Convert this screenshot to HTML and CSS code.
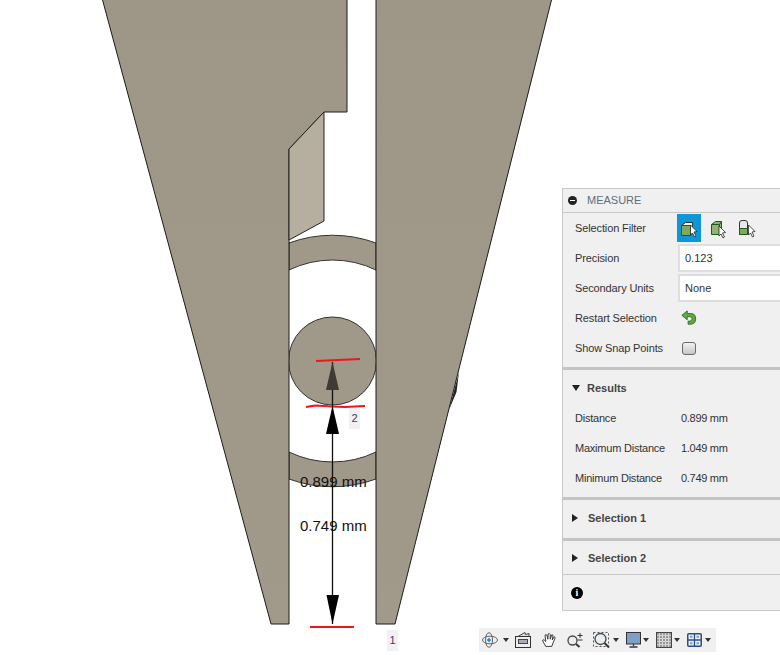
FILE: index.html
```html
<!DOCTYPE html>
<html lang="en">
<head>
    <meta charset="UTF-8">
    <meta name="viewport" content="width=device-width, initial-scale=1.0">
    <title>Measure</title>
    <link rel="stylesheet" href="styles.css">
</head>
<body>
    <svg class="model" width="780" height="655" viewBox="0 0 780 655">
        <defs>
            <linearGradient id="body" x1="0" y1="0" x2="0" y2="1">
                <stop offset="0" stop-color="#9e9686"/>
                <stop offset="1" stop-color="#a19a8a"/>
            </linearGradient>
        </defs>
        <!-- ring -->
        <path class="part" d="M289 243 A126 126 0 0 1 376 243 L376 270 A100 100 0 0 0 289 270 Z"/>
        <path class="part" d="M289 452 A100 100 0 0 0 376 452 L376 479 A126 126 0 0 1 289 479 Z"/>
        <circle class="part" cx="332.5" cy="361" r="44"/>
        <!-- jaws -->
        <path class="sliver" d="M459 372 L456.500 392 L449 410 Z"/>
        <path class="jaw" d="M102 -2 L347 -2 L347 112 L324 112 L289 149 L289 624 L271 624 Z"/>
        <path class="jaw" d="M376 -2 L552 -2 L395 624 L376 624 Z"/>
        <path class="face" d="M289 149 L324 112 L324 221 L289 240 Z"/>

        <path class="red" d="M316 361 L338 360 L360 359"/>
        <path class="red" d="M306 407 L315 405.500 L332 406.500 L345 407 L365 406"/>
        <path class="red" d="M310 627 L354 627"/>

        <path class="dim" d="M332.500 362 L332.500 624"/>
        <path class="head-faint" d="M332.500 362 L339 390 L326 390 Z"/>
        <path class="head" d="M332.500 406 L339 434 L326 434 Z"/>
        <path class="head" d="M332.500 624 L339 595 L326.500 595 Z"/>

        <text class="dim-label" x="300" y="487">0.899 mm</text>
        <text class="dim-label" x="300" y="531">0.749 mm</text>
    </svg>

    <div class="tag tag-two">2</div>
    <div class="tag tag-one">1</div>

    <section class="panel">
        <header class="panel-head">
            <span class="collapse"></span>
            <span class="panel-title">MEASURE</span>
        </header>

        <div class="group">
            <div class="row">
                <label>Selection Filter</label>
                <div class="filters">
                    <span class="filter active">
                        <svg width="24" height="28" viewBox="0 0 24 28">
                            <path d="M4.500 11.500 L8.500 8.500 H15.500 V18 L13.500 21.500 H4.500 Z" fill="#f2f2ee" stroke="#333"/>
                            <path d="M4.500 11.500 H13.500 V21.500 H4.500 Z" fill="#7fa860" stroke="#1f5a1a"/>
                            <path d="M13.500 11 L20 17.500 L17 18 L19 22 L17.500 23 L15.500 19 L13.500 21 Z" fill="#fff" stroke="#222" stroke-width=".8"/>
                        </svg>
                    </span>
                    <span class="filter">
                        <svg width="24" height="28" viewBox="0 0 24 28">
                            <path d="M4.500 10.500 L8.500 7.500 H14.500 V17 L12.500 20.500 H4.500 Z" fill="#8fb570" stroke="#1f5a1a"/>
                            <path d="M4.500 10.500 H12.500 V20.500 M12.500 10.500 L14.500 7.500" fill="none" stroke="#1f5a1a"/>
                            <path d="M12 12 L18.500 18.500 L15.500 19 L17.500 23 L16 24 L14 20 L12 22 Z" fill="#fff" stroke="#222" stroke-width=".8"/>
                        </svg>
                    </span>
                    <span class="filter">
                        <svg width="24" height="28" viewBox="0 0 24 28">
                            <path d="M2.500 9 Q2.500 6.500 5 6.500 H8 Q10.500 6.500 10.500 9 V20.500 H2.500 Z" fill="#e6e8ea" stroke="#333"/>
                            <path d="M2.500 14.500 H10.500 V20.500 H2.500 Z" fill="#7fa860" stroke="#1f5a1a"/>
                            <path d="M11.500 11 L18 17.500 L15 18 L17 22 L15.500 23 L13.500 19 L11.500 21 Z" fill="#fff" stroke="#222" stroke-width=".8"/>
                        </svg>
                    </span>
                </div>
            </div>
            <div class="row">
                <label>Precision</label>
                <div class="field">0.123</div>
            </div>
            <div class="row">
                <label>Secondary Units</label>
                <div class="field">None</div>
            </div>
            <div class="row">
                <label>Restart Selection</label>
                <svg class="restart" width="16" height="16" viewBox="0 0 18 18">
                    <path d="M1 6 L7 1 V4 H11 Q16.500 4 16.500 10 Q16.500 16 10 16 H8 V12.500 H10 Q12.500 12.500 12.500 10 Q12.500 7.500 10 7.500 H7 V11 Z" fill="#63a947" stroke="#2c6a22" stroke-width="1"/>
                </svg>
            </div>
            <div class="row">
                <label>Show Snap Points</label>
                <span class="check"></span>
            </div>
        </div>

        <div class="group">
            <div class="section-head"><span class="arrow-down"></span>Results</div>
            <div class="row"><label class="result">Distance</label><span class="value">0.899 mm</span></div>
            <div class="row"><label class="result">Maximum Distance</label><span class="value">1.049 mm</span></div>
            <div class="row"><label class="result">Minimum Distance</label><span class="value">0.749 mm</span></div>
        </div>

        <div class="group tight">
            <div class="section-head"><span class="arrow-right"></span>Selection 1</div>
        </div>
        <div class="group last">
            <div class="section-head"><span class="arrow-right"></span>Selection 2</div>
        </div>

        <footer class="panel-foot">
            <span class="info">i</span>
        </footer>
    </section>

    <nav class="toolbar">
        <svg class="ic-orbit" width="16" height="16" viewBox="0 0 16 16">
            <ellipse cx="8" cy="8" rx="7.500" ry="3.800" fill="none" stroke="#555" stroke-width=".9"/>
            <ellipse cx="7" cy="8" rx="3.500" ry="7.300" fill="none" stroke="#555" stroke-width=".9"/>
            <path d="M7 6 V10 M5 8 H9" stroke="#2a7fd0" stroke-width="1.500"/>
        </svg>
        <span class="caret c-first"></span>
        <svg class="ic-camera" width="16" height="16" viewBox="0 0 16 16">
            <path d="M2 5 L10 .5 L10.500 2.500 L14 1.500 V4.500" fill="#ddd" stroke="#444"/>
            <rect x=".5" y="4.500" width="15" height="11" fill="#eee" stroke="#333"/>
            <rect x="3.500" y="7.500" width="9" height="4" fill="#a9acb4" stroke="#444"/>
        </svg>
        <svg class="ic-tool" width="16" height="16" viewBox="0 0 20 20">
            <path d="M6 18 L2 11 Q2 9 4 10 L6 12 L5 4 Q6 2.500 7.500 4 L8.500 9 L9 2.500 Q10.500 1 11.500 3 L11.500 9 L13.500 3.500 Q15 3 15 5 L14 10 L16.500 6 Q18 6 17.500 8 L14.500 15 L13.500 18 Z" fill="#fff" stroke="#333" stroke-width="1.200"/>
        </svg>
        <svg class="ic-tool" width="16" height="16" viewBox="0 0 16 16">
            <circle cx="5.500" cy="8.500" r="4.500" fill="#e8eef2" stroke="#444" stroke-width="1.300"/>
            <path d="M9 12 L12.500 15" stroke="#333" stroke-width="2"/>
            <path d="M10.500 3.500 H15.500 M13 1 V6 M10.500 8 H15.500" stroke="#333"/>
        </svg>
        <svg class="ic-tool" width="17" height="16" viewBox="0 0 17 16">
            <rect x=".5" y=".5" width="15" height="14" fill="none" stroke="#555" stroke-dasharray="2 2"/>
            <circle cx="7.500" cy="7" r="5.500" fill="#e8eef2" stroke="#444" stroke-width="1.300"/>
            <path d="M11.500 11 L16 15.500" stroke="#333" stroke-width="2"/>
        </svg>
        <span class="caret c-after"></span>
        <svg class="ic-display" width="15" height="16" viewBox="0 0 15 16">
            <rect x=".5" y=".5" width="14" height="11.500" fill="#7f9fcb" stroke="#333"/>
            <path d="M7.500 12 V14 M3.500 15 H11.500" stroke="#333" stroke-width="1.300"/>
        </svg>
        <span class="caret c-near"></span>
        <svg class="ic-grid" width="16" height="16" viewBox="0 0 16 16">
            <rect x=".5" y=".5" width="15" height="15" fill="#999" stroke="#444"/>
            <path d="M3.500 1 V15 M6.500 1 V15 M9.500 1 V15 M12.500 1 V15 M1 3.500 H15 M1 6.500 H15 M1 9.500 H15 M1 12.500 H15" stroke="#d6d6d6"/>
        </svg>
        <span class="caret c-near"></span>
        <svg class="ic-grid" width="15" height="14" viewBox="0 0 15 14">
            <rect x=".75" y=".75" width="13.500" height="12.500" rx="1" fill="#e8eef5" stroke="#2c4f86" stroke-width="1.500"/>
            <path d="M7.500 1 V13 M1 7 H14" stroke="#2c4f86" stroke-width="1.300"/>
            <path d="M3 3.800 H5.500 M9.500 3.800 H12 M3 10.200 H5.500 M9.500 10.200 H12" stroke="#7f9fcb" stroke-width="2"/>
        </svg>
        <span class="caret c-after"></span>
    </nav>
</body>
</html>
```

FILE: styles.css
```css
* {
    margin: 0;
    padding: 0;
    box-sizing: border-box;
}
html, body {
    width: 780px;
    height: 655px;
    overflow: hidden;
    background: #fff;
    font-family: "Liberation Sans", Arial, sans-serif;
}
body {
    position: relative;
}

/* model viewport */
.model {
    position: absolute;
    left: 0;
    top: 0;
}
.part {
    fill: #a09888;
    stroke: #333;
    stroke-width: 1;
}
.jaw {
    fill: url(#body);
    stroke: #1c1c1c;
    stroke-width: 1;
}
.face {
    fill: #b6afa0;
    stroke: #222;
    stroke-width: 1;
}
.sliver {
    fill: #222;
}
.red {
    fill: none;
    stroke: #f0141e;
    stroke-width: 2;
}
.dim {
    stroke: #111;
    stroke-width: 1.300;
}
.head {
    fill: #000;
}
.head-faint {
    fill: #3e3b34;
}
.dim-label {
    font-size: 15px;
    fill: #111;
}
.tag {
    position: absolute;
    background: #f1f1f4;
    font-size: 11px;
    text-align: center;
}
.tag-two {
    left: 349px;
    top: 408px;
    width: 11px;
    height: 21px;
    line-height: 21px;
    color: #2d3f66;
}
.tag-one {
    left: 387px;
    top: 630px;
    width: 11px;
    height: 21px;
    line-height: 21px;
    color: #5e2a78;
}

/* measure panel */
.panel {
    position: absolute;
    left: 562px;
    top: 188px;
    width: 240px;
    height: 423px;
    background: #f0f0f0;
    border: 1px solid #c8c8c8;
    font-size: 11px;
    color: #333;
}
.panel-head {
    display: flex;
    align-items: center;
    height: 24px;
    padding: 0 0 1px 5px;
    border-bottom: 1px solid #c8c8c8;
}
.collapse {
    position: relative;
    width: 9px;
    height: 9px;
    border-radius: 50%;
    background: #222;
}
.collapse::after {
    content: "";
    position: absolute;
    left: 2px;
    top: 4px;
    width: 5px;
    height: 1px;
    background: #fff;
}
.panel-title {
    margin-left: 10px;
    font-size: 11px;
    color: #5c6f7c;
}
.group {
    border-bottom: 3px solid #c4c4c4;
    padding: 0 0 4px 12px;
}
.group.tight {
    padding-bottom: 2px;
}
.group.last {
    padding-bottom: 0;
    border-bottom: 0;
}
.row {
    display: flex;
    align-items: center;
    height: 30px;
}
.row label {
    width: 106px;
    flex: none;
    letter-spacing: -0.12px;
}
.row label.result {
    letter-spacing: -0.22px;
}
.filters {
    display: flex;
    gap: 6px;
    margin-left: -4px;
}
.filter {
    display: block;
    width: 24px;
    height: 28px;
}
.filter.active {
    background: #0e97d8;
}
.field {
    width: 120px;
    height: 28px;
    margin-left: -3px;
    padding-left: 5px;
    line-height: 25px;
    background: #fff;
    border: 2px solid #dedede;
    border-right: 0;
}
.check {
    width: 14px;
    height: 13px;
    margin-left: 1px;
    border: 1px solid #6a6a6a;
    border-radius: 3px;
    background: linear-gradient(#f2f2f2, #c6c6c6);
}
.value {
    letter-spacing: -0.3px;
}
.section-head {
    display: flex;
    align-items: center;
    height: 36px;
    margin-left: -3px;
    font-weight: bold;
    color: #444;
}
.section-head + .row {
    margin-top: -3px;
}
.group.last .section-head {
    height: 33px;
}
.arrow-down {
    width: 0;
    height: 0;
    margin-right: 7px;
    border-left: 4.500px solid transparent;
    border-right: 4.500px solid transparent;
    border-top: 6px solid #222;
}
.arrow-right {
    width: 0;
    height: 0;
    margin-right: 10px;
    border-top: 4.500px solid transparent;
    border-bottom: 4.500px solid transparent;
    border-left: 6px solid #222;
}
.panel-foot {
    display: flex;
    align-items: center;
    height: 36px;
    padding-left: 8px;
    border-top: 1px solid #c8c8c8;
}
.info {
    width: 12px;
    height: 12px;
    border-radius: 50%;
    background: #000;
    color: #fff;
    font: bold 10px/12px "Liberation Serif", serif;
    text-align: center;
}

/* navigation bar */
.toolbar {
    position: absolute;
    left: 479px;
    top: 628px;
    width: 237px;
    height: 24px;
    display: flex;
    align-items: center;
    padding-left: 3px;
    background: #f0f0f0;
}
.caret {
    width: 0;
    height: 0;
    border-left: 3px solid transparent;
    border-right: 3px solid transparent;
    border-top: 4px solid #333;
}
.c-first {
    margin-left: 5px;
}
.c-after {
    margin-left: 3px;
}
.c-near {
    margin-left: 2px;
}
.ic-camera {
    margin-left: 6px;
}
.ic-tool {
    margin-left: 10px;
}
.ic-display {
    margin-left: 7px;
}
.ic-grid {
    margin-left: 7px;
}
```
